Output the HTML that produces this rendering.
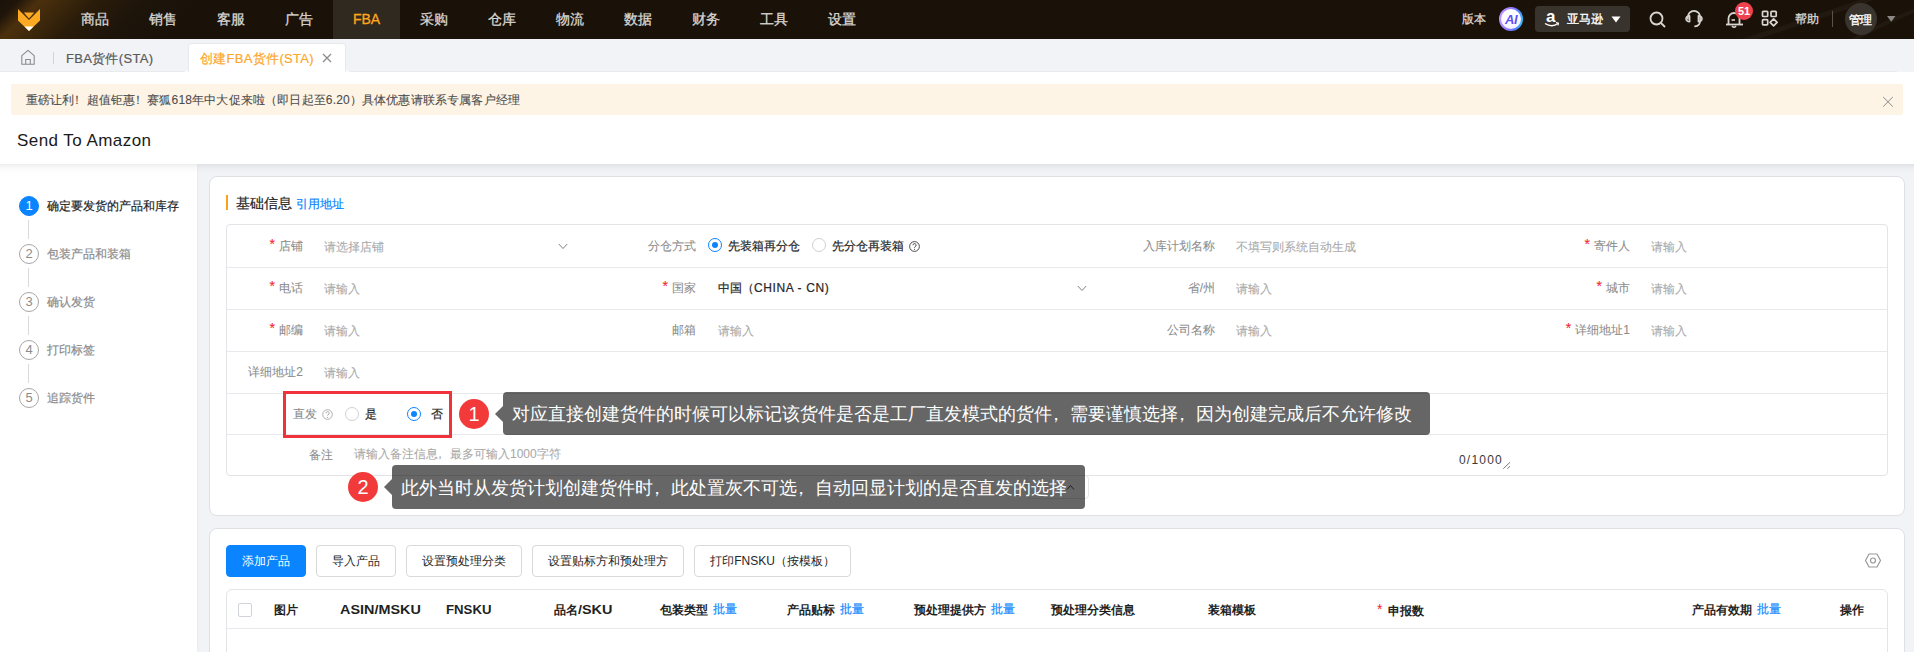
<!DOCTYPE html>
<html><head><meta charset="utf-8">
<style>
*{box-sizing:border-box;margin:0;padding:0}
html,body{width:1914px;height:652px;overflow:hidden}
body{position:relative;background:#f2f3f7;font-family:"Liberation Sans",sans-serif;font-size:12px;color:#262626}
.a{position:absolute;white-space:nowrap}
#side,#hdr,#form,.card,#tabs{-webkit-text-stroke:0.2px currentColor}
.th,.btn,.step{-webkit-text-stroke:0}
.lbl,.ph{-webkit-text-stroke:0.08px currentColor}
#nav{position:absolute;left:0;top:0;width:1914px;height:39px;background:linear-gradient(135deg,#1a1209 0px,#1f150a 13px,#4b300d 28px,#3f290b 44px,#2a1c0a 68px,#1d140a 105px,#1a1209 145px);overflow:hidden;z-index:3}
#nav .glow{display:none}
#nav .glow2{display:none}
.ni{position:absolute;top:0;height:39px;line-height:39px;font-size:14px;color:#d9d6d2;text-align:center;-webkit-text-stroke:0.3px #d9d6d2}
.ni.act{-webkit-text-stroke:0.3px #fda61c}
.ni.act{background:#302920;color:#fda61c}
#tabs{position:absolute;left:0;top:39px;width:1914px;height:33px;background:#f2f3f7}
#hdr{position:absolute;left:0;top:72px;width:1914px;height:92px;background:#fff;z-index:2}
#hshadow{position:absolute;left:0;top:164px;width:1914px;height:10px;background:linear-gradient(rgba(0,0,0,.07),rgba(0,0,0,.025) 40%,rgba(0,0,0,0));z-index:2}
#banner{position:absolute;left:11px;top:12px;width:1892px;height:31px;background:#fef4e5;border-radius:2px}
#side{position:absolute;left:0;top:164px;width:197px;height:488px;background:#fff;box-shadow:1px 0 3px rgba(0,0,0,.04)}
.step{position:absolute;left:19px;width:20px;height:20px;border-radius:50%;border:1px solid #a6a6a6;color:#8c8c8c;font-size:13px;line-height:18px;text-align:center}
.step.on{background:#0a84ff;border-color:#0a84ff;color:#fff}
.stxt{position:absolute;left:47px;font-size:12px;color:#8c8c8c;white-space:nowrap}
.sline{position:absolute;left:28px;width:1px;height:19px;background:#d9d9d9}
.card{position:absolute;left:209px;width:1696px;background:#fff;border:1px solid #dfe0e4;border-radius:8px}
.tbl{position:absolute;left:16px;width:1662px;border:1px solid #e3e4e8;border-radius:4px}
.lbl{position:absolute;color:#8c8c8c;font-size:12px;white-space:nowrap;line-height:16px}
.lr{text-align:right;width:120px}
.ph{position:absolute;color:#a9a9a9;font-size:12px;white-space:nowrap;line-height:16px}
.val{position:absolute;color:#262626;font-size:12px;white-space:nowrap;line-height:16px}
.req{color:#f5222d;margin-right:4px;font-size:14px;line-height:10px;position:relative;top:-1px}
.rl{position:absolute;left:0;width:1660px;height:1px;background:#e8e9ed}
.radio{position:absolute;width:14px;height:14px;border-radius:50%;border:1px solid #d0d0d0;background:#fff}
.radio.on{border-color:#0a84ff}
.radio.on:after{content:"";position:absolute;left:3px;top:3px;width:6px;height:6px;border-radius:50%;background:#0a84ff}
.chev{position:absolute;width:10px;height:7px}
.btn{position:absolute;top:16px;height:32px;border:1px solid #d9d9d9;border-radius:4px;background:#fff;color:#262626;font-size:12px;line-height:30px;text-align:center}
.th{position:absolute;top:13px;font-size:12px;font-weight:bold;color:#1f1f1f;white-space:nowrap;line-height:16px}
.blue{color:#1288ff;font-weight:normal;position:relative;top:-1px;-webkit-text-stroke:0.2px currentColor}
.tip{position:absolute;height:43px;background:rgba(0,0,0,.6);border-radius:4px;color:#fff;font-size:18px;line-height:43px;padding-left:9px;padding-top:1px;white-space:nowrap}
.tip:before{content:"";position:absolute;left:-8px;top:13.5px;border-right:8px solid rgba(0,0,0,.6);border-top:8px solid transparent;border-bottom:8px solid transparent}
.cm{display:inline-block;width:1em;text-indent:-0.3em}
.num{position:absolute;width:30px;height:30px;border-radius:50%;background:#f23a3a;color:#fff;font-size:20px;line-height:30px;text-align:center}
</style></head><body>

<div id="nav">
  <div class="glow"></div><div class="glow2"></div>
  <svg class="a" style="left:1700px;top:0" width="214" height="39" viewBox="0 0 214 39"><path d="M40,42 Q110,20 175,-3" stroke="rgba(255,240,220,.035)" stroke-width="5" fill="none"/><path d="M150,42 Q185,22 216,10" stroke="rgba(255,240,220,.035)" stroke-width="4" fill="none"/></svg>
  <svg class="a" style="left:0;top:0" width="60" height="39" viewBox="0 0 60 39">
    <polygon points="18,9 29,20 40,9 40,20.5 29,31 18,20.5" fill="#fdaa22"/>
    <polygon points="23.8,12.6 34.2,12.6 29,18.6" fill="#fdaa22"/>
    <polygon points="29,31 24.5,26.5 33.5,26.5" fill="#fff"/>
  </svg>
  <div class="ni" style="left:61px;width:68px">商品</div>
  <div class="ni" style="left:129px;width:68px">销售</div>
  <div class="ni" style="left:197px;width:68px">客服</div>
  <div class="ni" style="left:265px;width:68px">广告</div>
  <div class="ni act" style="left:333px;width:67px">FBA</div>
  <div class="ni" style="left:400px;width:68px">采购</div>
  <div class="ni" style="left:468px;width:68px">仓库</div>
  <div class="ni" style="left:536px;width:68px">物流</div>
  <div class="ni" style="left:604px;width:68px">数据</div>
  <div class="ni" style="left:672px;width:68px">财务</div>
  <div class="ni" style="left:740px;width:68px">工具</div>
  <div class="ni" style="left:808px;width:68px">设置</div>

  <div class="a" style="left:1462px;top:11px;font-size:12px;color:#d9d6d2;line-height:16px;-webkit-text-stroke:0.3px #d9d6d2">版本</div>
  <div class="a" style="left:1499px;top:7px;width:24px;height:24px;border-radius:50%;background:linear-gradient(100deg,#c59bff 0%,#9a7cff 40%,#5a78ff 70%,#22d8ff 100%);"></div>
  <div class="a" style="left:1501px;top:9px;width:20px;height:20px;border-radius:50%;background:radial-gradient(circle at 50% 35%,#ffffff 40%,#ece6ff);color:#5f4ff5;font-size:13px;font-weight:bold;font-style:italic;line-height:21px;text-align:center;letter-spacing:-0.5px">AI</div>
  <div class="a" style="left:1535px;top:6px;width:95px;height:26px;border-radius:4px;background:#39332d"></div>
  <div class="a" style="left:1546px;top:6px;font-size:17px;font-weight:bold;color:#fff;line-height:22px">a</div>
  <svg class="a" style="left:1544px;top:22px" width="16" height="6" viewBox="0 0 16 6"><path d="M1,1.5 Q8,6 14,1.5" stroke="#fff" stroke-width="1.4" fill="none"/><path d="M12,0.5 L14.5,1.2 L14,3.5" stroke="#fff" stroke-width="1.1" fill="none"/></svg>
  <div class="a" style="left:1567px;top:11px;font-size:12px;color:#fff;line-height:16px;-webkit-text-stroke:0.3px #fff">亚马逊</div>
  <svg class="a" style="left:1611px;top:16px" width="10" height="7" viewBox="0 0 10 7"><polygon points="0.5,0.5 9.5,0.5 5,6.5" fill="#fff"/></svg>

  <svg class="a" style="left:1649px;top:11px" width="18" height="17" viewBox="0 0 18 17"><circle cx="7.5" cy="7.5" r="6" stroke="#d9d6d2" stroke-width="1.8" fill="none"/><path d="M12,12 L16,16" stroke="#d9d6d2" stroke-width="1.8"/></svg>
  <svg class="a" style="left:1684px;top:9px" width="20" height="19" viewBox="0 0 20 19"><path d="M3.9,10 V8 A6.1,6.1 0 0 1 16.1,8 V11.5 Q16.1,17 11,17.4" stroke="#d9d6d2" stroke-width="1.7" fill="none" stroke-linecap="round"/><path d="M5.6,6.8 A3.6,2.95 0 0 0 5.6,12.7 Z" stroke="#d9d6d2" stroke-width="1.6" fill="none" stroke-linejoin="round"/><path d="M14.4,6.8 A3.6,2.95 0 0 1 14.4,12.7 Z" stroke="#d9d6d2" stroke-width="1.6" fill="none" stroke-linejoin="round"/></svg>
  <svg class="a" style="left:1725px;top:10px" width="19" height="18" viewBox="0 0 19 18"><path d="M3.5,14 V8.5 A5.5,5.5 0 0 1 14.5,8.5 V14" stroke="#d9d6d2" stroke-width="1.8" fill="none"/><path d="M1,14.5 H18" stroke="#d9d6d2" stroke-width="1.8"/><path d="M7,16 Q9,18.5 11,16" stroke="#d9d6d2" stroke-width="1.6" fill="none"/><path d="M6.5,10 H10" stroke="#d9d6d2" stroke-width="1.6"/></svg>
  <div class="a" style="left:1735px;top:2px;width:18px;height:18px;border-radius:50%;background:#f0414f;color:#fff;font-size:11px;font-weight:bold;line-height:18px;text-align:center">51</div>
  <svg class="a" style="left:1761px;top:10px" width="18" height="17" viewBox="0 0 18 17"><g stroke="#d9d6d2" stroke-width="1.7" fill="none" stroke-linejoin="round"><rect x="1.5" y="1.3" width="5.2" height="5.2" rx="0.8"/><rect x="10" y="1.3" width="5.2" height="5.2" rx="0.8"/><rect x="1.5" y="9.7" width="5.2" height="5.2" rx="0.8"/><path d="M12.6,8.9 L16.1,12.4 L12.6,15.9 L9.1,12.4 Z"/></g></svg>
  <div class="a" style="left:1795px;top:11px;font-size:12px;color:#d9d6d2;line-height:16px;-webkit-text-stroke:0.3px #d9d6d2">帮助</div>
  <div class="a" style="left:1832px;top:11px;width:1px;height:16px;background:#5a534b"></div>
  <div class="a" style="left:1845px;top:3px;width:32px;height:32px;border-radius:50%;background:#3a342e"></div>
  <div class="a" style="left:1849px;top:12px;font-size:12px;color:#fff;line-height:16px;letter-spacing:-1px;-webkit-text-stroke:0.35px #fff">管理</div>
  <svg class="a" style="left:1886px;top:15px" width="10" height="8" viewBox="0 0 10 8"><polygon points="1,1 9.5,1 5.25,6.8" fill="#8c8782"/></svg>
</div>

<div id="tabs">
  <div class="a" style="left:0;top:32px;width:1897px;height:1px;background:#e9eaee"></div>
  <svg class="a" style="left:20px;top:10px" width="16" height="16" viewBox="0 0 16 16"><path d="M1.8,15.2 V6.6 L8,1.3 L14.2,6.6 V15.2 Z" stroke="#8a8a8a" stroke-width="1.1" fill="none" stroke-linejoin="round"/><path d="M5.7,15 V10.5 H10.3 V15" stroke="#8a8a8a" stroke-width="1.1" fill="none"/></svg>
  <div class="a" style="left:53px;top:13px;width:1px;height:12px;background:#d4d4d8"></div>
  <div class="a" style="left:66px;top:12px;font-size:13px;color:#595959;line-height:16px;letter-spacing:0.3px">FBA货件(STA)</div>
  <div class="a" style="left:184px;top:29px;width:166px;height:4px;background:#fff"></div><div class="a" style="left:184px;top:29px;width:4px;height:4px;background:#f2f3f7;border-bottom-right-radius:4px"></div><div class="a" style="left:346px;top:29px;width:4px;height:4px;background:#f2f3f7;border-bottom-left-radius:4px"></div>
  <div class="a" style="left:188px;top:4px;width:158px;height:29px;background:#fff;border:1px solid #e8e9ed;border-bottom:0;border-radius:4px 4px 0 0"></div>
  <div class="a" style="left:200px;top:12px;font-size:13px;color:#fda72b;line-height:16px;letter-spacing:0.3px">创建FBA货件(STA)</div>
  <svg class="a" style="left:322px;top:14px" width="10" height="10" viewBox="0 0 10 10"><path d="M1,1 L9,9 M9,1 L1,9" stroke="#8c8c8c" stroke-width="1.3"/></svg>
</div>

<div id="hdr">
  <div id="banner">
    <div class="a" style="left:15px;top:8px;font-size:12px;color:#4d4d4d;line-height:16px;letter-spacing:0.16px;-webkit-text-stroke:0.1px #4d4d4d">重磅让利<span class="cm">！</span>超值钜惠<span class="cm">！</span>赛狐618年中大促来啦（即日起至6.20）具体优惠请联系专属客户经理</div>
    <svg class="a" style="left:1871px;top:11.5px" width="12" height="12" viewBox="0 0 12 12"><path d="M1.2,1 L10.8,10.6 M10.8,1 L1.2,10.6" stroke="#8a8a8e" stroke-width="1"/></svg>
  </div>
  <div class="a" style="left:17px;top:59px;font-size:17px;color:#1a1a1a;letter-spacing:0.45px;-webkit-text-stroke:0">Send To Amazon</div>
</div>

<div id="hshadow"></div>
<div id="side">
  <div class="step on" style="top:32px">1</div>
  <div class="stxt" style="top:34px;color:#1f1f1f">确定要发货的产品和库存</div>
  <div class="sline" style="top:56px"></div>
  <div class="step" style="top:80px">2</div>
  <div class="stxt" style="top:82px">包装产品和装箱</div>
  <div class="sline" style="top:104px"></div>
  <div class="step" style="top:128px">3</div>
  <div class="stxt" style="top:130px">确认发货</div>
  <div class="sline" style="top:152px"></div>
  <div class="step" style="top:176px">4</div>
  <div class="stxt" style="top:178px">打印标签</div>
  <div class="sline" style="top:200px"></div>
  <div class="step" style="top:224px">5</div>
  <div class="stxt" style="top:226px">追踪货件</div>
</div>

<!-- CARD 1 -->
<div class="card" style="top:176px;height:340px">
  <div class="a" style="left:16px;top:18px;width:2px;height:15px;background:#fca11c"></div>
  <div class="a" style="left:26px;top:18px;font-size:14px;color:#1f1f1f;line-height:16px">基础信息</div>
  <div class="a" style="left:86px;top:19px;font-size:12px;color:#0a84ff;line-height:16px">引用地址</div>

  <div class="tbl" style="top:47px;height:252px">
    <div class="rl" style="top:42px"></div>
    <div class="rl" style="top:84px"></div>
    <div class="rl" style="top:126px"></div>
    <div class="rl" style="top:168px"></div>
    <div class="rl" style="top:209px"></div>
  </div>
</div>

<!-- CARD 2 -->
<div class="card" style="top:528px;height:200px">
  <div class="btn" style="left:16px;width:80px;background:#0a84ff;border-color:#0a84ff;color:#fff">添加产品</div>
  <div class="btn" style="left:106px;width:80px">导入产品</div>
  <div class="btn" style="left:196px;width:116px">设置预处理分类</div>
  <div class="btn" style="left:322px;width:152px">设置贴标方和预处理方</div>
  <div class="btn" style="left:484px;width:157px">打印FNSKU（按模板）</div>
  <svg class="a" style="left:1654px;top:23px" width="18" height="17" viewBox="0 0 18 17"><path d="M5,2 H13 L16.5,8.5 L13,15 H5 L1.5,8.5 Z" stroke="#999" stroke-width="1.2" fill="none" stroke-linejoin="round"/><circle cx="9" cy="8.5" r="2.5" stroke="#999" stroke-width="1.2" fill="none"/></svg>
  <div class="tbl" style="top:60px;height:200px;border-radius:6px">
    <div class="rl" style="top:38px"></div>
  </div>
</div>


<!-- FORM (page coords) -->
<div id="form">
  <!-- row1 -->
  <div class="lbl lr" style="left:183px;top:238px"><span class="req">*</span>店铺</div>
  <div class="ph" style="left:324px;top:239px">请选择店铺</div>
  <svg class="chev" style="left:558px;top:243px" viewBox="0 0 10 7"><path d="M0.8,1 L5,5.5 L9.2,1" stroke="#707070" stroke-width="0.9" fill="none"/></svg>
  <div class="lbl lr" style="left:576px;top:238px">分仓方式</div>
  <div class="radio on" style="left:708px;top:238px"></div>
  <div class="val" style="left:728px;top:238px">先装箱再分仓</div>
  <div class="radio" style="left:812px;top:238px"></div>
  <div class="val" style="left:832px;top:238px">先分仓再装箱</div>
  <svg class="a" style="left:909px;top:241px" width="11" height="11" viewBox="0 0 11 11"><circle cx="5.5" cy="5.5" r="4.9" stroke="#3a3a3a" stroke-width="0.9" fill="none"/><path d="M4,4.2 A1.55,1.55 0 1 1 6.1,5.6 Q5.5,6 5.5,6.8" stroke="#3a3a3a" stroke-width="0.9" fill="none"/><circle cx="5.5" cy="8.2" r="0.55" fill="#3a3a3a"/></svg>
  <div class="lbl lr" style="left:1095px;top:238px">入库计划名称</div>
  <div class="ph" style="left:1236px;top:239px">不填写则系统自动生成</div>
  <div class="lbl lr" style="left:1510px;top:238px"><span class="req">*</span>寄件人</div>
  <div class="ph" style="left:1651px;top:239px">请输入</div>
  <!-- row2 -->
  <div class="lbl lr" style="left:183px;top:280px"><span class="req">*</span>电话</div>
  <div class="ph" style="left:324px;top:281px">请输入</div>
  <div class="lbl lr" style="left:576px;top:280px"><span class="req">*</span>国家</div>
  <div class="val" style="left:718px;top:280px">中国（<span style="letter-spacing:0.6px">CHINA - CN)</span></div>
  <svg class="chev" style="left:1077px;top:285px" viewBox="0 0 10 7"><path d="M0.8,1 L5,5.5 L9.2,1" stroke="#707070" stroke-width="0.9" fill="none"/></svg>
  <div class="lbl lr" style="left:1095px;top:280px">省/州</div>
  <div class="ph" style="left:1236px;top:281px">请输入</div>
  <div class="lbl lr" style="left:1510px;top:280px"><span class="req">*</span>城市</div>
  <div class="ph" style="left:1651px;top:281px">请输入</div>
  <!-- row3 -->
  <div class="lbl lr" style="left:183px;top:322px"><span class="req">*</span>邮编</div>
  <div class="ph" style="left:324px;top:323px">请输入</div>
  <div class="lbl lr" style="left:576px;top:322px">邮箱</div>
  <div class="ph" style="left:718px;top:323px">请输入</div>
  <div class="lbl lr" style="left:1095px;top:322px">公司名称</div>
  <div class="ph" style="left:1236px;top:323px">请输入</div>
  <div class="lbl lr" style="left:1510px;top:322px"><span class="req">*</span>详细地址1</div>
  <div class="ph" style="left:1651px;top:323px">请输入</div>
  <!-- row4 -->
  <div class="lbl lr" style="left:183px;top:364px">详细地址2</div>
  <div class="ph" style="left:324px;top:365px">请输入</div>
  <!-- row5 -->
  <div class="lbl" style="left:293px;top:406px">直发</div>
  <svg class="a" style="left:322px;top:409px" width="11" height="11" viewBox="0 0 11 11"><circle cx="5.5" cy="5.5" r="4.8" stroke="#a6a6a6" stroke-width="0.9" fill="none"/><path d="M4,4.4 A1.6,1.6 0 1 1 6,5.8 Q5.5,6.1 5.5,6.8" stroke="#a6a6a6" stroke-width="0.9" fill="none"/><circle cx="5.5" cy="8.3" r="0.6" fill="#a6a6a6"/></svg>
  <div class="radio" style="left:345px;top:407px"></div>
  <div class="val" style="left:365px;top:406px">是</div>
  <div class="radio on" style="left:407px;top:407px"></div>
  <div class="val" style="left:431px;top:406px">否</div>
  <!-- row6 -->
  <div class="lbl" style="left:309px;top:447px">备注</div>
  <div class="ph" style="left:354px;top:446px">请输入备注信息<span class="cm">，</span>最多可输入1000字符</div>
  <div class="val" style="left:1459px;top:452px;color:#3a3a3a;letter-spacing:1.2px;-webkit-text-stroke:0">0/1000</div>
  <svg class="a" style="left:1502px;top:461px" width="9" height="9" viewBox="0 0 9 9"><path d="M1.3,7.7 L8,1.3 M5.4,7.7 L8,5.2" stroke="#5a5a5a" stroke-width="0.8"/></svg>
</div>

<!-- TABLE HEADER -->
<div id="thead">
  <div class="a" style="left:238px;top:603px;width:14px;height:14px;border:1px solid #d0d3d9;border-radius:2px;background:#fff"></div>
  <div class="th" style="left:274px;top:602px">图片</div>
  <div class="th" style="left:340px;top:602px;transform:scaleX(1.2);transform-origin:0 0">ASIN/MSKU</div>
  <div class="th" style="left:446px;top:602px;transform:scaleX(1.1);transform-origin:0 0">FNSKU</div>
  <div class="th" style="left:554px;top:602px">品名<span style="display:inline-block;transform:scaleX(1.2);transform-origin:0 0">/SKU</span></div>
  <div class="th" style="left:660px;top:602px">包装类型<span class="blue" style="margin-left:4.5px">批量</span></div>
  <div class="th" style="left:787px;top:602px">产品贴标<span class="blue" style="margin-left:4.5px">批量</span></div>
  <div class="th" style="left:914px;top:602px">预处理提供方<span class="blue" style="margin-left:4.5px">批量</span></div>
  <div class="th" style="left:1051px;top:602px">预处理分类信息</div>
  <div class="th" style="left:1208px;top:602px">装箱模板</div>
  <div class="th" style="left:1377px;top:602px"><span style="color:#f5222d;font-weight:normal;margin-right:6px;font-size:14px;position:relative;top:-1px">*</span>申报数</div>
  <div class="th" style="left:1692px;top:602px">产品有效期<span class="blue" style="margin-left:4.5px">批量</span></div>
  <div class="th" style="left:1840px;top:602px">操作</div>
</div>

<!-- ANNOTATIONS -->
<div class="a" style="left:1026px;top:475px;width:63px;height:24px;border:1px solid #e6e6e6;border-radius:4px;background:#fff"></div>
<div class="a" style="left:283px;top:391px;width:169px;height:47px;border:3px solid #f0333a"></div>
<div class="num" style="left:459px;top:399px">1</div>
<div class="tip" style="left:503px;top:392px;width:927px">对应直接创建货件的时候可以标记该货件是否是工厂直发模式的货件<span class="cm">，</span>需要谨慎选择<span class="cm">，</span>因为创建完成后不允许修改</div>
<div class="num" style="left:348px;top:472px">2</div>
<div class="tip" style="left:392px;top:465px;width:693px;height:44px;line-height:44px">此外当时从发货计划创建货件时<span class="cm">，</span>此处置灰不可选<span class="cm">，</span>自动回显计划的是否直发的选择</div>

<svg class="a" style="left:1066px;top:484px" width="9" height="7" viewBox="0 0 9 7"><path d="M1,5.5 L4.5,1.5 L8,5.5" stroke="#1f1f1f" stroke-width="1" fill="none"/></svg>
</body></html>
